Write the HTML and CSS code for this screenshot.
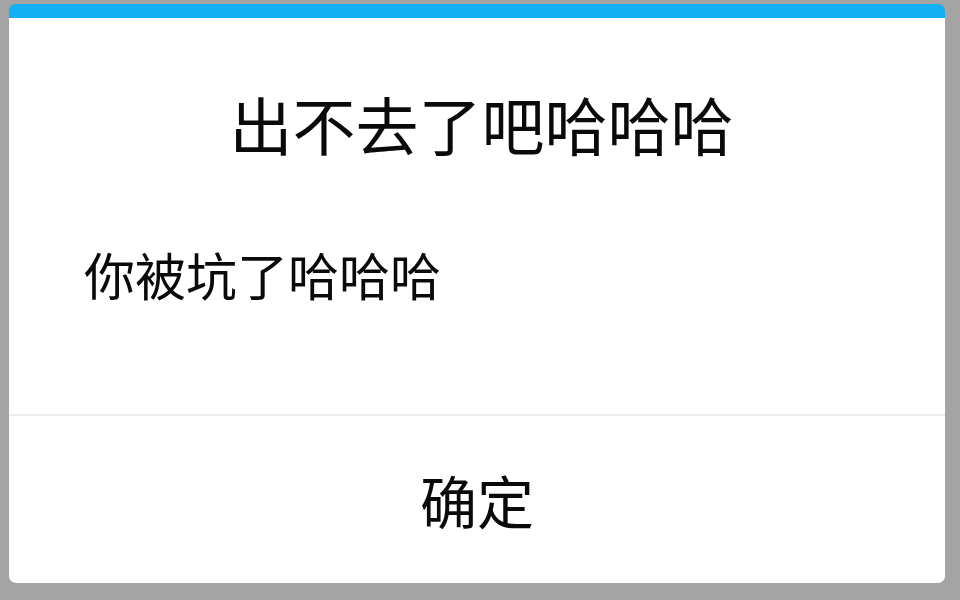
FILE: index.html
```html
<!DOCTYPE html>
<html lang="zh-CN">
<head>
<meta charset="utf-8">
<title>对话框</title>
<link rel="stylesheet" href="styles.css">
</head>
<body>
<div class="dialog">
  <div class="title">出不去了吧哈哈哈</div>
  <div class="message">你被坑了哈哈哈</div>
  <div class="divider"></div>
  <div class="actions"><span class="button">确定</span></div>
</div>
</body>
</html>
```

FILE: styles.css
```css
html, body {
  margin: 0;
  padding: 0;
  height: 100%;
}
body {
  background: #a4a4a4;
  font-family: "Noto Sans CJK SC", "Noto Sans", sans-serif;
  color: #0a0a0a;
  overflow: hidden;
}
.dialog {
  box-sizing: border-box;
  margin: 4px 15px 0 9px;
  height: 579px;
  background: #fff;
  border-top: 14px solid #12b0f2;
  border-radius: 7px;
  display: flex;
  flex-direction: column;
}
.title {
  margin-top: 73px;
  padding-left: 9px;
  font-size: 63px;
  line-height: 63px;
  text-align: center;
}
.message {
  margin-top: 95px;
  padding-left: 75px;
  font-size: 51px;
  line-height: 51px;
}
.divider {
  margin-top: 114px;
  height: 2px;
  background: #ececec;
}
.actions {
  flex: 1;
  display: flex;
  align-items: center;
  justify-content: center;
}
.button {
  font-size: 57px;
  line-height: 57px;
}
```
